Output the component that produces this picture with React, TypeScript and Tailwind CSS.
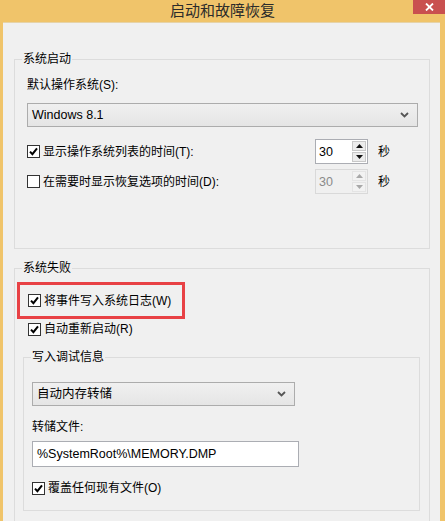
import React from 'react';

const FONT = "font-['Liberation_Sans','Noto_Sans_CJK_SC',sans-serif]";

const Check = ({ checked }: { checked: boolean }) => (
  <span className="w-[13px] h-[13px] border border-[#333] bg-white flex items-center justify-center shrink-0">
    {checked && (
      <svg width="9" height="9" viewBox="0 0 9 9">
        <path d="M1 4.6 L3.4 7.2 L8 1.4" stroke="#000" strokeWidth="2" fill="none" />
      </svg>
    )}
  </span>
);

const Chevron = () => (
  <svg width="9" height="6" viewBox="0 0 9 6">
    <path d="M1 1 L4.5 4.5 L8 1" stroke="#555" strokeWidth="1.8" fill="none" />
  </svg>
);

const Select = ({ value, width }: { value: string; width: string }) => (
  <div
    className={`${width} h-[24px] border border-[#acacac] bg-gradient-to-b from-[#f0f0f0] to-[#e5e5e5] flex items-center justify-between pl-[4px] pr-[8px] text-[12.5px] leading-[16px] text-black`}
  >
    <span>{value}</span>
    <Chevron />
  </div>
);

const Arrow = ({ up, disabled }: { up: boolean; disabled?: boolean }) => (
  <svg width="7" height="4" viewBox="0 0 7 4">
    <path d={up ? 'M0 4 L3.5 0 L7 4 Z' : 'M0 0 L3.5 4 L7 0 Z'} fill={disabled ? '#a8a8a8' : '#111'} />
  </svg>
);

const Spin = ({ disabled }: { disabled?: boolean }) => (
  <div
    className={`w-[53px] h-[25px] border flex ${disabled ? 'border-[#d9d9d9] bg-[#f0f0f0] text-[#8a8a8a]' : 'border-[#abadb3] bg-white text-black'}`}
  >
    <div className="flex-1 pl-[3px] flex items-center text-[12.5px] leading-[16px]">30</div>
    <div className="w-[15px] flex flex-col py-[1px] pr-[1px] gap-[1px]">
      <div
        className={`flex-1 flex items-center justify-center border ${disabled ? 'border-[#e4e4e4] bg-[#f2f2f2]' : 'border-[#c8c8c8] bg-[#ececec]'}`}
      >
        <Arrow up disabled={disabled} />
      </div>
      <div
        className={`flex-1 flex items-center justify-center border ${disabled ? 'border-[#e4e4e4] bg-[#f2f2f2]' : 'border-[#c8c8c8] bg-[#ececec]'}`}
      >
        <Arrow up={false} disabled={disabled} />
      </div>
    </div>
  </div>
);

export default function App() {
  return (
    <div className={`${FONT} w-[445px] h-[521px] bg-[#f0c46a] flex flex-col overflow-hidden relative text-black`}>
      {/* title bar */}
      <div className="h-[22px] shrink-0 flex items-center justify-center text-[15px] leading-[18px] text-[#2b2b2b]">
        启动和故障恢复
      </div>
      <div className="absolute right-0 top-0 w-[32px] h-[14px] bg-[#c9504f] flex items-center justify-center">
        <svg width="9" height="8" viewBox="0 0 9 8">
          <path d="M1 0.5 L8 7.5 M8 0.5 L1 7.5" stroke="#fff" strokeWidth="1.8" />
        </svg>
      </div>

      {/* client area */}
      <div className="flex-1 ml-[3px] mr-[5px] bg-[#f0f0f0] border-t border-[#e6d3a8] text-[12px] leading-[16px]">
        {/* 系统启动 */}
        <fieldset className="mt-[29px] ml-[11px] w-[416px] h-[197px] border border-[#dcdcdc]">
          <legend className="ml-[7px] px-[1px] leading-[14px]">系统启动</legend>
          <div className="pl-[12px]">
            <div className="mt-[11px]">默认操作系统(S):</div>
            <div className="mt-[10px]">
              <Select value="Windows 8.1" width="w-[391px]" />
            </div>
            <div className="mt-[12px] flex items-center h-[25px]">
              <div className="w-[288px] flex items-center gap-[3px]">
                <Check checked />
                <span>显示操作系统列表的时间(T):</span>
              </div>
              <Spin />
              <span className="ml-[10px]">秒</span>
            </div>
            <div className="mt-[5px] flex items-center h-[25px]">
              <div className="w-[288px] flex items-center gap-[3px]">
                <Check checked={false} />
                <span>在需要时显示恢复选项的时间(D):</span>
              </div>
              <Spin disabled />
              <span className="ml-[10px]">秒</span>
            </div>
          </div>
        </fieldset>

        {/* 系统失败 */}
        <fieldset className="mt-[12px] ml-[11px] w-[416px] h-[300px] border border-[#dcdcdc]">
          <legend className="ml-[7px] px-[1px] leading-[14px]">系统失败</legend>
          <div className="mt-[7px] ml-[2px] w-[168px] h-[37px] border-[3px] border-[#e84145] flex items-center pl-[8px] gap-[3px]">
            <Check checked />
            <span>将事件写入系统日志(W)</span>
          </div>
          <div className="mt-[2px] ml-[13px] flex items-center gap-[3px]">
            <Check checked />
            <span>自动重新启动(R)</span>
          </div>

          {/* 写入调试信息 */}
          <fieldset className="mt-[13px] ml-[8px] w-[397px] h-[161px] border border-[#dcdcdc]">
            <legend className="ml-[7px] px-[1px] leading-[14px]">写入调试信息</legend>
            <div className="pl-[8px]">
              <div className="mt-[18px]">
                <Select value="自动内存转储" width="w-[263px]" />
              </div>
              <div className="mt-[13px]">转储文件:</div>
              <div className="mt-[6px] w-[267px] h-[26px] border border-[#abadb3] bg-white flex items-center pl-[4px] text-[12.5px]">
                %SystemRoot%\MEMORY.DMP
              </div>
              <div className="mt-[13px] flex items-center gap-[3px]">
                <Check checked />
                <span>覆盖任何现有文件(O)</span>
              </div>
            </div>
          </fieldset>
        </fieldset>
      </div>
    </div>
  );
}
